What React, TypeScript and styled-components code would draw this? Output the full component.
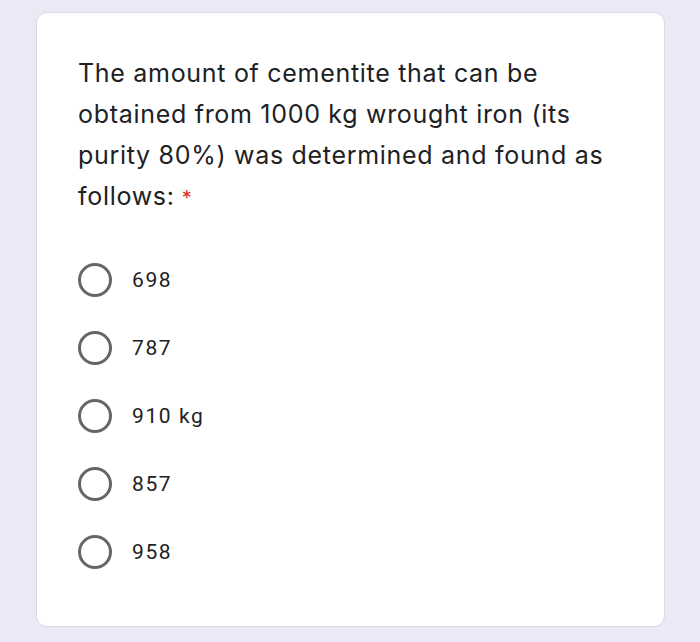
import React from "react";
import styled, { createGlobalStyle } from "styled-components";

const Global = createGlobalStyle`
  html, body { margin: 0; padding: 0; background: #ece8f6; }
  body { width: 700px; height: 642px; overflow: hidden; }
`;

const Page = styled.div`
  width: 700px;
  height: 642px;
  box-sizing: border-box;
  padding: 12px 35px 15px 36px;
  background: #ece8f6;
`;

const Card = styled.div`
  box-sizing: border-box;
  height: 615px;
  background: #ffffff;
  border: 1px solid #dcd8e6;
  border-radius: 11px;
  padding: 40px 20px 0 41px;
`;

const Question = styled.div`
  font-family: Inter, sans-serif;
  font-size: 25px;
  letter-spacing: 0.7px;
  line-height: 41px;
  color: #202124;
  margin-bottom: 27px;
`;

const Line = styled.span`
  display: block;
  white-space: nowrap;
`;

const Required = styled.span`
  color: #d93025;
  margin-left: 7px;
  font-size: 20px;
  letter-spacing: 0;
`;

const Options = styled.div`
  display: flex;
  flex-direction: column;
`;

const Option = styled.label`
  display: flex;
  align-items: center;
  height: 68px;
  gap: 20px;
`;

const Radio = styled.span`
  box-sizing: border-box;
  width: 34px;
  height: 34px;
  border-radius: 50%;
  border: 3px solid #666666;
  flex: none;
`;

const OptionText = styled.span`
  font-family: Roboto, sans-serif;
  font-size: 21px;
  letter-spacing: 1.6px;
  color: #202124;
`;

const options = ["698", "787", "910 kg", "857", "958"];

export default function App() {
  return (
    <>
      <Global />
      <Page>
        <Card>
          <Question>
            <Line>The amount of cementite that can be</Line>
            <Line>obtained from 1000 kg wrought iron (its</Line>
            <Line>purity 80%) was determined and found as</Line>
            <Line>
              follows:<Required>*</Required>
            </Line>
          </Question>
          <Options>
            {options.map((o) => (
              <Option key={o}>
                <Radio />
                <OptionText>{o}</OptionText>
              </Option>
            ))}
          </Options>
        </Card>
      </Page>
    </>
  );
}
